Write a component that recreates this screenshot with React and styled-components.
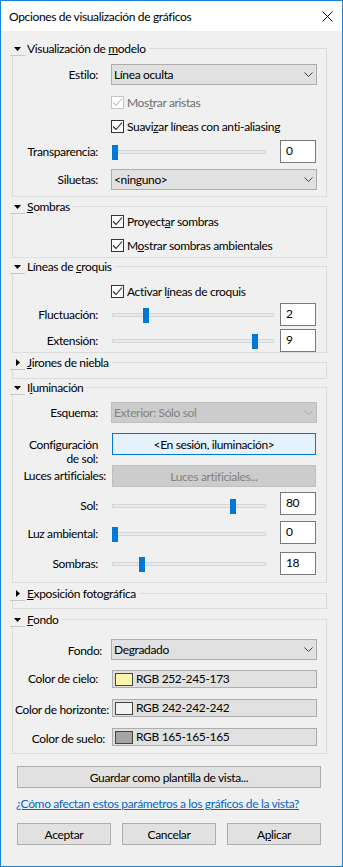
import React from 'react';
import styled, { createGlobalStyle } from 'styled-components';

const GlobalStyle = createGlobalStyle`
  html, body {
    margin: 0;
    padding: 0;
    background: #f0f0f0;
  }
  body {
    font-family: Lato, "Noto Sans", sans-serif;
    font-size: 12px;
    letter-spacing: -0.35px;
    color: #000;
  }
`;

const Window = styled.div`
  width: 343px;
  height: 867px;
  box-sizing: border-box;
  border: 1px solid #1883d7;
  background: #f0f0f0;
  display: flex;
  flex-direction: column;
  overflow: hidden;
`;

const TitleBar = styled.div`
  height: 30px;
  flex-shrink: 0;
  background: #fff;
  display: flex;
  align-items: center;
  justify-content: space-between;
  padding: 0 9px 0 8px;
`;

const Content = styled.div`
  display: flex;
  flex-direction: column;
  padding: 0 15px 0 11px;
`;

const Section = styled.div`
  display: flex;
  flex-direction: column;
  margin-top: ${p => p.$mt}px;
`;

const Header = styled.div`
  position: relative;
  z-index: 1;
  align-self: flex-start;
  display: flex;
  align-items: center;
  height: 14px;
  line-height: 14px;
  margin-left: -2px;
  padding-right: 3px;
  background: #f0f0f0;
`;

const Toggle = styled.span`
  width: 15px;
  height: 13px;
  border-bottom: 1px solid #c8c8c8;
  display: flex;
  align-items: center;
  justify-content: center;
  margin-right: 2px;
`;

const Box = styled.div`
  margin-top: -8px;
  border: 1px solid #dcdcdc;
  min-height: ${p => p.$h || 0}px;
  padding-bottom: ${p => p.$pb || 0}px;
  display: flex;
  flex-direction: column;
`;

const Row = styled.div`
  display: flex;
  align-items: ${p => (p.$top ? 'flex-start' : 'center')};
  height: ${p => p.$h}px;
  margin-top: ${p => p.$mt}px;
  padding-right: 9px;
`;

const Label = styled.div`
  flex-shrink: 0;
  width: ${p => 85 + (p.$shift || 0)}px;
  margin-right: ${p => 13 - (p.$shift || 0)}px;
  margin-top: ${p => (p.$drop || 0) * 2}px;
  padding-top: ${p => p.$pt || 0}px;
  text-align: right;
  line-height: 14px;
  white-space: nowrap;
`;

const Combo = styled.div`
  flex: 1;
  height: 21px;
  box-sizing: border-box;
  border: 1px solid ${p => (p.$disabled ? '#bfbfbf' : '#adadad')};
  background: ${p => (p.$disabled ? '#cccccc' : '#e1e1e1')};
  color: ${p => (p.$disabled ? '#838383' : '#000')};
  display: flex;
  align-items: center;
  justify-content: space-between;
  padding: 0 3px 0 2px;
`;

const Check = styled.div`
  display: flex;
  align-items: center;
  gap: 3px;
  color: ${p => (p.$disabled ? '#6d6d6d' : '#000')};
`;

const CheckBox = styled.span`
  width: 13px;
  height: 13px;
  box-sizing: border-box;
  border: 1px solid ${p => (p.$disabled ? '#c4c4c4' : '#333')};
  background: #fff;
  display: flex;
  align-items: center;
  justify-content: center;
`;

const SliderArea = styled.div`
  flex: 1;
  display: flex;
  align-items: center;
  margin-top: ${p => (p.$drop || 0) * 2}px;
  padding-left: 1px;
`;

const Track = styled.div`
  position: relative;
  width: ${p => p.$w}px;
  height: 4px;
  box-sizing: border-box;
  border: 1px solid #d6d6d6;
  background: #e7eaea;
`;

const Thumb = styled.div`
  position: absolute;
  top: -6px;
  width: 6px;
  height: 15px;
  background: #0078d7;
`;

const ValueBox = styled.div`
  width: 36px;
  height: 23px;
  box-sizing: border-box;
  margin-right: 1px;
  border: 1px solid #7a7a7a;
  background: #fff;
  padding: 2px 0 0 5px;
  line-height: 16px;
`;

const Button = styled.div`
  flex: ${p => (p.$grow ? 1 : 'none')};
  width: ${p => (p.$w ? `${p.$w}px` : 'auto')};
  height: 22px;
  box-sizing: border-box;
  margin: 0 ${p => (p.$inset ? 1 : 0)}px;
  border: 1px solid ${p => p.$border || '#adadad'};
  background: ${p => p.$bg || '#e1e1e1'};
  color: ${p => p.$color || '#000'};
  display: flex;
  align-items: center;
  justify-content: center;
`;

const ColorField = styled.div`
  flex: 1;
  height: 18px;
  box-sizing: border-box;
  margin-left: 1px;
  border: 1px solid #adadad;
  background: #e1e1e1;
  display: flex;
  align-items: flex-end;
  gap: 3px;
  padding: 0 0 1px 2px;
  line-height: 14px;
`;

const Swatch = styled.span`
  width: 18px;
  height: 13px;
  box-sizing: border-box;
  border: 1px solid #444;
  background: ${p => p.$c};
`;

const Footer = styled.div`
  display: flex;
  flex-direction: column;
  margin: 12px 6px 0 5px;
`;

const Link = styled.a`
  margin: 8px 0 0 -1px;
  line-height: 16px;
  color: #0066cc;
  text-decoration: underline;
  white-space: nowrap;
`;

const ButtonRow = styled.div`
  display: flex;
  justify-content: space-between;
  margin-top: 11px;
`;

const U = styled.span`
  text-decoration: underline;
`;

const Down = () => (
  <svg width="7" height="4" viewBox="0 0 7 4">
    <polygon points="0,0 7,0 3.5,4" fill="#000" />
  </svg>
);

const Right = () => (
  <svg width="4" height="7" viewBox="0 0 4 7">
    <polygon points="0,0 4,3.5 0,7" fill="#000" />
  </svg>
);

const Chevron = ({ color = '#404040' }) => (
  <svg width="9" height="5" viewBox="0 0 9 5">
    <polyline points="0.5,0.5 4.5,4.5 8.5,0.5" fill="none" stroke={color} strokeWidth="1" />
  </svg>
);

const Tick = ({ color }) => (
  <svg width="11" height="11" viewBox="0 0 11 11">
    <polyline points="1,5.5 4,8.5 10,1.5" fill="none" stroke={color} strokeWidth="1.1" />
  </svg>
);

const Group = ({ title, open, mt, h, pb, children }) => (
  <Section $mt={mt}>
    <Header>
      <Toggle>{open ? <Down /> : <Right />}</Toggle>
      {title}
    </Header>
    <Box $h={h} $pb={pb}>{children}</Box>
  </Section>
);

const CheckRow = ({ mt, disabled, children }) => (
  <Row $h={17} $mt={mt}>
    <Label />
    <Check $disabled={disabled}>
      <CheckBox $disabled={disabled}>
        <Tick color={disabled ? '#c4c4c4' : '#222'} />
      </CheckBox>
      <span>{children}</span>
    </Check>
  </Row>
);

const SliderRow = ({ label, value, max, width, mt, drop }) => (
  <Row $h={23} $mt={mt}>
    <Label $drop={drop}>{label}</Label>
    <SliderArea $drop={drop}>
      <Track $w={width}>
        <Thumb style={{ left: Math.round(((width - 6) * value) / max) - 1 }} />
      </Track>
    </SliderArea>
    <ValueBox>{value}</ValueBox>
  </Row>
);

const ComboRow = ({ label, value, mt, disabled, shift, drop }) => (
  <Row $h={21} $mt={mt}>
    <Label $shift={shift} $drop={drop}>{label}</Label>
    <Combo $disabled={disabled}>
      {value}
      <Chevron color={disabled ? '#a8a8a8' : '#404040'} />
    </Combo>
  </Row>
);

const ColorRow = ({ label, rgb, mt, shift, drop }) => (
  <Row $h={18} $mt={mt}>
    <Label $shift={shift} $drop={drop}>{label}</Label>
    <ColorField>
      <Swatch $c={`rgb(${rgb.join(',')})`} />
      RGB {rgb.join('-')}
    </ColorField>
  </Row>
);

export default function App() {
  return (
    <Window>
      <GlobalStyle />
      <TitleBar>
        Opciones de visualización de gráficos
        <svg width="11" height="11" viewBox="0 0 11 11">
          <path d="M0.5 0.5 L10.5 10.5 M10.5 0.5 L0.5 10.5" stroke="#000" strokeWidth="1" />
        </svg>
      </TitleBar>
      <Content>
        <Group title={<span>Visualización de <U>m</U>odelo</span>} open mt={11} pb={6}>
          <ComboRow label="Estilo:" value="Línea oculta" mt={15} />
          <CheckRow mt={9} disabled>Mos<U>t</U>rar aristas</CheckRow>
          <CheckRow mt={7}>Suavi<U>z</U>ar líneas con anti-aliasing</CheckRow>
          <SliderRow label="Transparencia:" value={0} max={100} width={154} mt={5} />
          <ComboRow label="Siluetas:" value="<ninguno>" mt={6} />
        </Group>

        <Group title={<span><U>S</U>ombras</span>} open mt={3} pb={3}>
          <CheckRow mt={6}>Proyect<U>a</U>r sombras</CheckRow>
          <CheckRow mt={7}>M<U>o</U>strar sombras ambientales</CheckRow>
        </Group>

        <Group title={<span>Líneas de <U>c</U>roquis</span>} open mt={2}>
          <CheckRow mt={16}>Activar l<U>í</U>neas de croquis</CheckRow>
          <SliderRow label="Fluctuación:" value={2} max={10} width={162} mt={3} />
          <SliderRow label="Extensión:" value={9} max={10} width={162} mt={3} />
        </Group>

        <Group title={<span><U>J</U>irones de niebla</span>} mt={3} h={15} />

        <Group title={<span>I<U>l</U>uminación</span>} open mt={2} pb={7}>
          <ComboRow label="Esquema:" value="Exterior: Sólo sol" mt={14} disabled />
          <Row $h={22} $mt={10} $top>
            <Label $pt={5}>Configuración<br />de sol:</Label>
            <Button $grow $inset $bg="#e5f1fb" $border="#0078d7">&lt;En sesión, iluminación&gt;</Button>
          </Row>
          <Row $h={22} $mt={10}>
            <Label $shift={8}>Luces artificiales:</Label>
            <Button $grow $inset $bg="#cccccc" $border="#bfbfbf" $color="#838383">Luces artificiales...</Button>
          </Row>
          <SliderRow label="Sol:" value={80} max={100} width={154} mt={5} drop={2} />
          <SliderRow label="Luz ambiental:" value={0} max={100} width={154} mt={6} drop={1} />
          <SliderRow label="Sombras:" value={18} max={100} width={154} mt={8} />
        </Group>

        <Group title={<span><U>E</U>xposición fotográfica</span>} mt={4} h={14} />

        <Group title={<span><U>F</U>ondo</span>} open mt={4} pb={7}>
          <ComboRow label="Fondo:" value="Degradado" mt={19} shift={4} drop={1} />
          <ColorRow label="Color de cielo:" rgb={[252, 245, 173]} mt={10} />
          <ColorRow label="Color de horizonte:" rgb={[242, 242, 242]} mt={11} shift={11} drop={2} />
          <ColorRow label="Color de suelo:" rgb={[165, 165, 165]} mt={11} shift={7} drop={2} />
        </Group>

        <Footer>
          <Button>Guardar como plantilla de vista...</Button>
          <Link>¿Cómo afectan estos parámetros a los gráficos de la vista?</Link>
          <ButtonRow>
            <Button $w={94}>Aceptar</Button>
            <Button $w={94}>Cancelar</Button>
            <Button $w={94}>A<U>p</U>licar</Button>
          </ButtonRow>
        </Footer>
      </Content>
    </Window>
  );
}
